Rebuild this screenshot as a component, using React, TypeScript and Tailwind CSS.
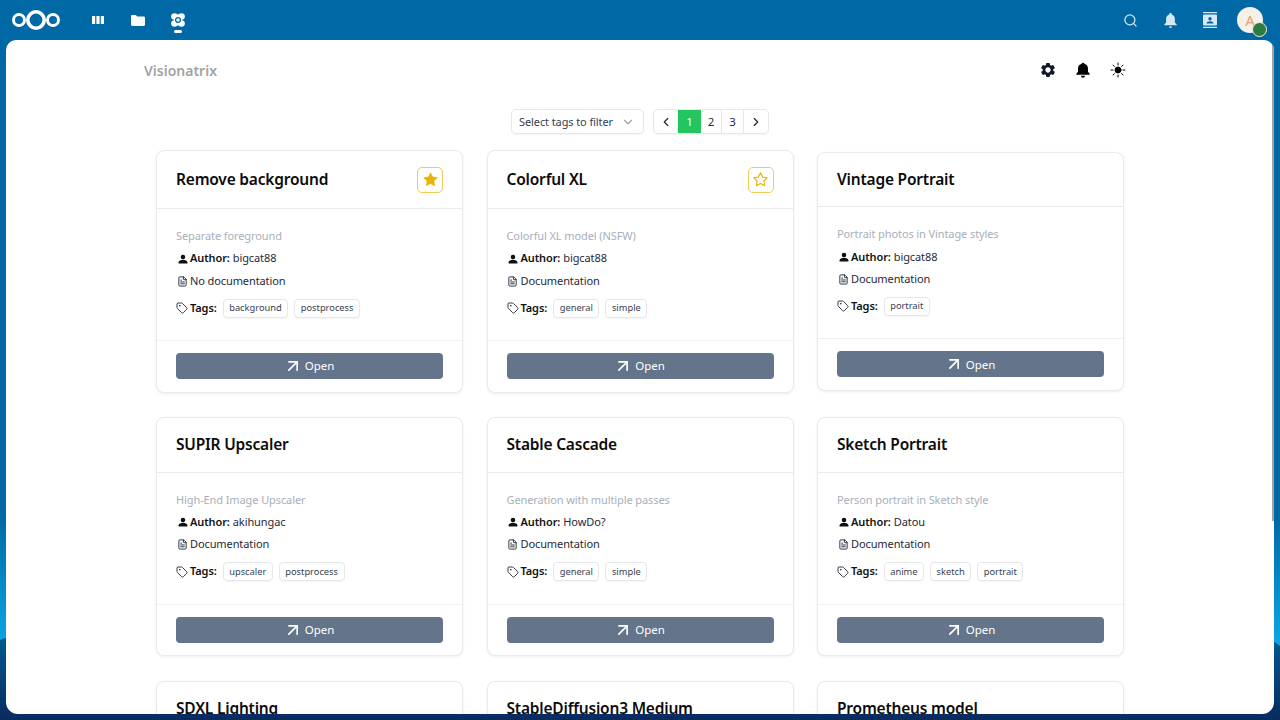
import { ArrowUpRight, ChevronDown, ChevronLeft, ChevronRight, FileText, Search, Tag } from 'lucide-react';

type Card = {
  title: string;
  desc?: string;
  author?: string;
  doc?: string;
  tags?: string[];
  star?: 'on' | 'off';
};

const rows: { cards: Card[] }[] = [
  {
    cards: [
      { title: 'Remove background', desc: 'Separate foreground', author: 'bigcat88', doc: 'No documentation', tags: ['background', 'postprocess'], star: 'on' },
      { title: 'Colorful XL', desc: 'Colorful XL model (NSFW)', author: 'bigcat88', doc: 'Documentation', tags: ['general', 'simple'], star: 'off' },
      { title: 'Vintage Portrait', desc: 'Portrait photos in Vintage styles', author: 'bigcat88', doc: 'Documentation', tags: ['portrait'] },
    ],
  },
  {
    cards: [
      { title: 'SUPIR Upscaler', desc: 'High-End Image Upscaler', author: 'akihungac', doc: 'Documentation', tags: ['upscaler', 'postprocess'] },
      { title: 'Stable Cascade', desc: 'Generation with multiple passes', author: 'HowDo?', doc: 'Documentation', tags: ['general', 'simple'] },
      { title: 'Sketch Portrait', desc: 'Person portrait in Sketch style', author: 'Datou', doc: 'Documentation', tags: ['anime', 'sketch', 'portrait'] },
    ],
  },
  {
    cards: [{ title: 'SDXL Lighting' }, { title: 'StableDiffusion3 Medium' }, { title: 'Prometheus model' }],
  },
];

function StarIcon({ filled }: { filled: boolean }) {
  return (
    <svg viewBox="0 0 24 24" className="h-[17px] w-[17px]" fill={filled ? '#eab308' : 'none'} stroke="#eab308" strokeWidth={filled ? 1 : 1.6} strokeLinejoin="round">
      <path d="M12 2.6l2.9 6 6.6.9-4.8 4.6 1.2 6.6-5.900-3.200-5.900 3.200 1.200-6.600L2.500 9.500l6.600-.9z" />
    </svg>
  );
}

function UserIcon() {
  return (
    <svg viewBox="0 0 24 24" className="h-[10px] w-[10px]" fill="#111">
      <circle cx="12" cy="7" r="5.500" />
      <path d="M1.500 23v-3c0-3.800 5-6 10.500-6s10.500 2.200 10.500 6v3z" />
    </svg>
  );
}

function WorkflowCard({ card }: { card: Card }) {
  const hasStar = !!card.star;
  return (
    <div className="w-[307px] shrink-0 rounded-lg border border-[#e9eaec] bg-white shadow-[0_1px_3px_rgba(0,0,0,0.07)]">
      <div className={`flex items-center justify-between border-b border-[#e9eaec] px-[19px] ${hasStar ? 'h-[58px]' : 'h-[54.500px]'}`}>
        <h3 className="text-[15.500px] font-semibold tracking-[-0.2px] text-[#0b0b0b]">{card.title}</h3>
        {card.star && (
          <button className="flex h-[26px] w-[26px] items-center justify-center rounded-[5px] border border-[#f2cb5a]">
            <StarIcon filled={card.star === 'on'} />
          </button>
        )}
      </div>
      {card.desc ? (
        <>
          <div className="px-[19px] pt-[20px] text-[11px] tracking-[-0.1px] text-[#1f2937]">
            <p className="leading-[14px] text-[#a8afba]">{card.desc}</p>
            <div className="mt-[8.500px] flex h-[14px] items-center">
              <span className="mr-[2.500px] ml-[1.500px]">
                <UserIcon />
              </span>
              <b className="font-semibold text-[#111]">Author:</b>
              <span className="ml-[3px]">{card.author}</span>
            </div>
            <div className="mt-[8.500px] flex h-[14px] items-center">
              <FileText className="mr-[2.500px] ml-[0.500px] h-[11px] w-[11px]" strokeWidth={2} />
              <span>{card.doc}</span>
            </div>
            <div className="mt-[10px] flex h-[20px] items-center">
              <Tag className="mr-[2px] h-[12px] w-[12px]" strokeWidth={1.800} />
              <b className="mr-[6px] font-semibold text-[#111]">Tags:</b>
              {card.tags?.map((t) => (
                <span key={t} className="mr-[6px] flex h-[19px] items-center rounded-[4px] border border-[#e5e7eb] px-[5.500px] text-[9.300px] tracking-normal text-[#374151] shadow-[0_1px_1px_rgba(0,0,0,0.04)]">
                  {t}
                </span>
              ))}
            </div>
          </div>
          <div className="mt-[22px] border-t border-[#eef0f2] px-[19px] pt-[12px] pb-[12.500px]">
            <button className="flex h-[26px] w-full items-center justify-center gap-[2px] rounded-[4px] bg-[#64748b] pr-[2px] text-[11.500px] text-white">
              <ArrowUpRight className="h-[20px] w-[20px]" strokeWidth={2} />
              Open
            </button>
          </div>
        </>
      ) : (
        <div className="h-[60px]" />
      )}
    </div>
  );
}

export default function App() {
  return (
    <div
      className="relative flex h-[720px] w-[1280px] flex-col overflow-hidden bg-[linear-gradient(180deg,#0069a5_0%,#0069a5_72%,#0aa6e2_89%)]"
      style={{ fontFamily: '"Noto Sans", "Open Sans", sans-serif' }}
    >
      {/* wallpaper wave, only its edges show beside the main panel */}
      <svg viewBox="0 0 1280 720" className="absolute inset-0 h-[720px] w-[1280px]">
        <defs>
          <linearGradient id="wave" x1="0" y1="0" x2="0" y2="1">
            <stop offset="0" stopColor="#005f95" />
            <stop offset="1" stopColor="#0a2a5f" />
          </linearGradient>
        </defs>
        <path fill="url(#wave)" d="M0 640Q8 636 40 630L1240 630Q1265 634 1280 646V720H0z" />
      </svg>

      <header className="relative flex h-[40px] shrink-0 items-center justify-between">
        <div className="flex items-center">
          <svg viewBox="0 0 50 24" className="ml-[11px] h-[24px] w-[50px]" fill="none" stroke="white">
            <circle cx="25" cy="12" r="8.200" strokeWidth="3.600" />
            <circle cx="8" cy="12" r="5.500" strokeWidth="3" />
            <circle cx="42" cy="12" r="5.500" strokeWidth="3" />
          </svg>
          <nav className="ml-[27px] flex items-center gap-[20px]">
            <div className="flex h-[40px] w-[20px] items-center justify-center">
              <svg viewBox="0 0 12 8" className="h-[8px] w-[12px]" fill="white">
                <rect width="3.200" height="8" rx="0.500" />
                <rect x="4.400" width="3.200" height="8" />
                <rect x="8.800" width="3.200" height="8" rx="0.500" />
              </svg>
            </div>
            <div className="flex h-[40px] w-[20px] items-center justify-center">
              <svg viewBox="0 0 14 11" className="h-[11px] w-[14px]" fill="white">
                <path d="M0 1.200C0 .5.500 0 1.200 0h3.600l1.400 1.400h6.600c.6 0 1.200.5 1.200 1.200v7.200c0 .7-.6 1.200-1.200 1.200H1.200C.5 11 0 10.500 0 9.800z" />
              </svg>
            </div>
            <div className="relative flex h-[40px] w-[20px] items-center justify-center">
              <svg viewBox="0 0 14 14" className="h-[14px] w-[14px]">
                <g fill="white">
                  <circle cx="3.500" cy="3.500" r="3.300" />
                  <circle cx="10.500" cy="3.500" r="3.300" />
                  <circle cx="3.500" cy="10.500" r="3.300" />
                  <circle cx="10.500" cy="10.500" r="3.300" />
                  <rect x="3" y="1.500" width="8" height="11" />
                </g>
                <circle cx="7" cy="7" r="2.400" fill="none" stroke="#0069a5" strokeWidth="1.300" />
              </svg>
              <span className="absolute bottom-[7px] left-[6px] h-[3px] w-[8px] rounded-full bg-white" />
            </div>
          </nav>
        </div>
        <div className="flex items-center">
          <Search className="mr-[25px] h-[15px] w-[15px] text-[#d5e8f3]" strokeWidth={2} />
          <svg viewBox="0 0 24 24" className="mr-[25px] h-[15px] w-[15px]" fill="#d5e8f3">
            <path d="M12 0a2 2 0 0 1 2 2.300c3.500.9 5 3.900 5 7.200v5.500l3 3.500v1H2v-1L5 15V9.500c0-3.300 1.500-6.300 5-7.200A2 2 0 0 1 12 0zM9.500 21.500h5a2.500 2.500 0 0 1-5 0z" />
          </svg>
          <svg viewBox="0 0 14 16" className="mr-[20px] h-[16px] w-[14px]" fill="#d5e8f3">
            <rect y="0" width="14" height="1.200" />
            <rect y="14.800" width="14" height="1.200" />
            <path fillRule="evenodd" d="M1 2.500h12a1 1 0 0 1 1 1v9a1 1 0 0 1-1 1H1a1 1 0 0 1-1-1v-9a1 1 0 0 1 1-1zM7 5a1.700 1.700 0 1 0 0 3.400A1.700 1.700 0 0 0 7 5zM3.500 11.500h7c0-1.500-1.700-2.300-3.500-2.300s-3.500.8-3.500 2.300z" />
          </svg>
          <div className="relative mr-[17px] flex h-[26px] w-[26px] items-center justify-center rounded-full bg-[#f6f0e9] text-[15px] text-[#e0a273]">
            A
            <span className="absolute top-[14.500px] left-[14.500px] h-[15px] w-[15px] rounded-full border-[1.500px] border-[#f6f0e9] bg-[#2d7b41]" />
          </div>
        </div>
      </header>

      <main className="relative mx-[6px] mb-[6px] flex min-h-0 flex-1 flex-col overflow-hidden rounded-t-[10px] rounded-b-[12px] bg-white">
        <div className="flex h-[60px] shrink-0 items-center justify-between pr-[148px] pl-[138px]">
          <span className="text-[14px] font-semibold text-[#a3a3a3]">Visionatrix</span>
          <div className="flex items-center gap-[19px]">
            <svg viewBox="0 0 24 24" className="h-[16px] w-[16px] scale-110" fill="#111827">
              <path d="M19.140 12.940c.04-.3.060-.61.060-.94 0-.32-.020-.64-.070-.94l2.030-1.580a.49.49 0 0 0 .12-.61l-1.920-3.320a.488.488 0 0 0-.59-.22l-2.390.96c-.5-.38-1.030-.7-1.620-.94l-.36-2.540a.484.484 0 0 0-.48-.41h-3.840c-.24 0-.43.170-.47.410l-.36 2.540c-.59.240-1.130.570-1.620.940l-2.390-.96c-.22-.080-.47 0-.59.220L2.740 8.870c-.12.210-.080.470.120.610l2.030 1.580c-.050.300-.090.630-.090.940s.020.640.070.940l-2.030 1.580a.49.49 0 0 0-.12.610l1.920 3.320c.12.220.370.290.590.220l2.390-.96c.5.380 1.030.7 1.620.94l.36 2.540c.05.240.24.410.48.410h3.840c.24 0 .44-.170.47-.410l.36-2.540c.59-.240 1.130-.560 1.620-.940l2.390.96c.22.080.47 0 .59-.220l1.920-3.320c.12-.220.070-.470-.120-.610l-2.010-1.580zM12 15.600c-1.980 0-3.600-1.620-3.600-3.600s1.620-3.600 3.600-3.600 3.600 1.620 3.600 3.600-1.620 3.600-3.600 3.600z" />
            </svg>
            <svg viewBox="0 0 24 24" className="h-[16px] w-[16px]" fill="#000">
              <path d="M12 1a2 2 0 0 1 2 1.600c3.800 1 5.500 4 5.500 7.400v4.500l2.500 3v1.500H2v-1.500l2.500-3V10c0-3.400 1.700-6.400 5.500-7.400A2 2 0 0 1 12 1zM9 20.500h6a3 3 0 0 1-6 0z" />
            </svg>
            <svg viewBox="0 0 24 24" className="h-[16px] w-[16px]" fill="#000" stroke="#000" strokeWidth="1.500" strokeLinecap="round">
              <circle cx="12" cy="12" r="4.500" />
              <path d="M12 1.500v3M12 19.500v3M1.500 12h3M19.500 12h3M4.600 4.600l2 2M17.400 17.400l2 2M4.600 19.400l2-2M17.400 6.600l2-2" />
            </svg>
          </div>
        </div>

        <div className="flex h-[50px] shrink-0 items-start justify-center gap-[9px] pt-[9px]">
          <div className="flex h-[25px] w-[133px] items-center justify-between rounded-[5px] border border-[#e5e7eb] pt-[1px] pr-[8px] pl-[7px] text-[11px] tracking-[-0.1px] text-[#374151] shadow-[0_1px_2px_rgba(0,0,0,0.05)]">
            Select tags to filter
            <ChevronDown className="h-[14px] w-[14px] text-[#9ca3af]" />
          </div>
          <div className="flex h-[25px] overflow-hidden rounded-[5px] border border-[#e5e7eb] text-[11.500px] text-[#1f2937] shadow-[0_1px_2px_rgba(0,0,0,0.05)]">
            <div className="flex w-[24px] items-center justify-center">
              <ChevronLeft className="h-[14px] w-[14px]" />
            </div>
            <div className="flex w-[23px] items-center justify-center bg-[#22c55e] text-white">1</div>
            <div className="flex w-[21px] items-center justify-center border-r border-[#e5e7eb]">2</div>
            <div className="flex w-[22px] items-center justify-center border-r border-[#e5e7eb]">3</div>
            <div className="flex w-[24px] items-center justify-center">
              <ChevronRight className="h-[14px] w-[14px]" />
            </div>
          </div>
        </div>

        <div className="flex flex-col items-center gap-[24.500px]">
          {rows.map((row) => (
            <div key={row.cards[0].title} className="flex items-center gap-[23.500px]">
              {row.cards.map((card) => (
                <WorkflowCard key={card.title} card={card} />
              ))}
            </div>
          ))}
        </div>

        {/* scrollbar thumb */}
        <div className="absolute top-[5px] right-[0.500px] h-[476px] w-[2px] bg-[#a3a3a3]" />
      </main>
    </div>
  );
}
